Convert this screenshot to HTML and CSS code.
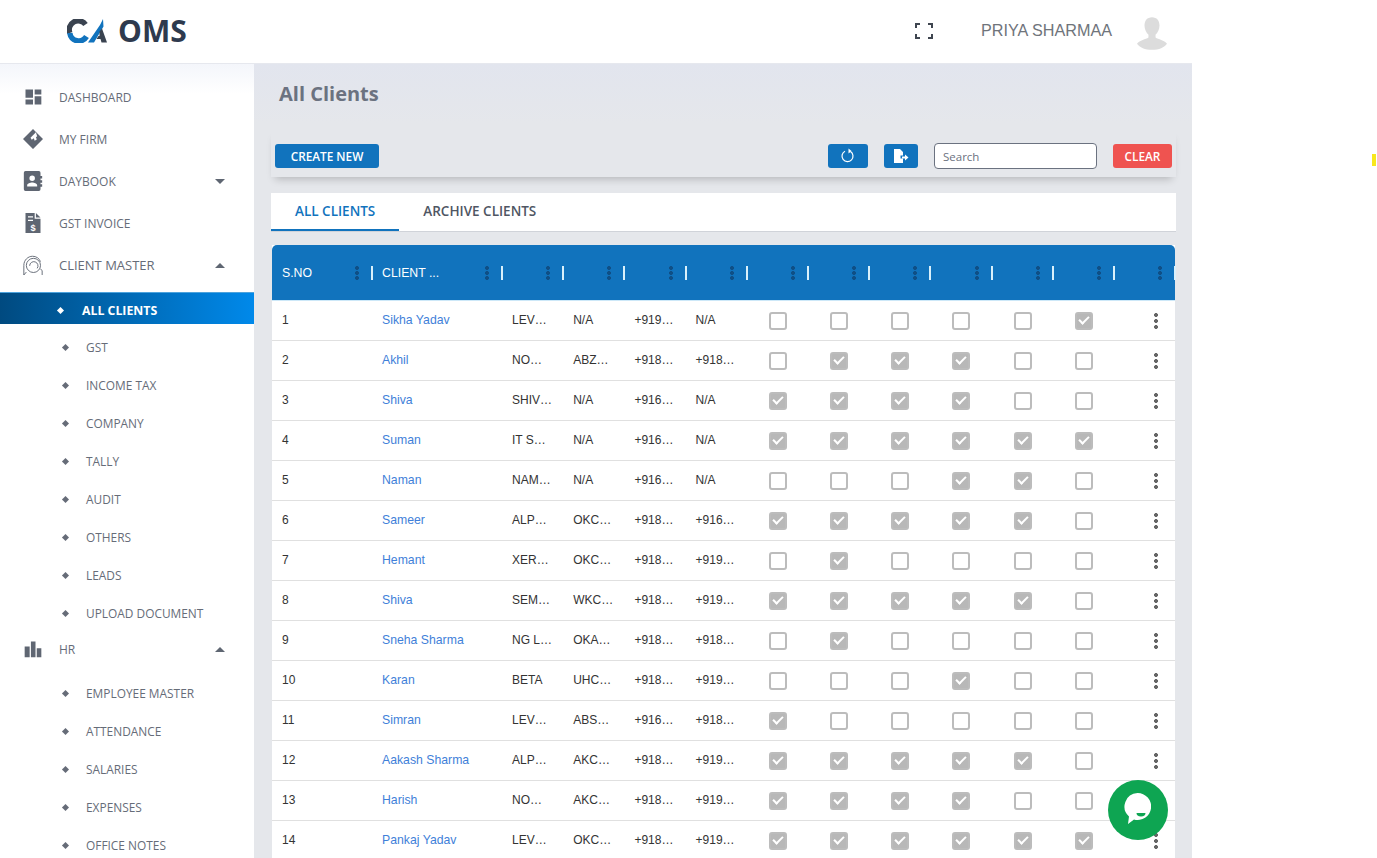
FILE: index.html
```html
<!DOCTYPE html>
<html lang="en">
<head>
  <meta charset="utf-8">
  <title>CA OMS - All Clients</title>
  <link rel="stylesheet" href="styles.css">
</head>
<body>
  <div class="app">
    <header class="topbar">
      <div class="logo">
        <svg class="logo-mark" width="40" height="24" viewBox="0 0 40 24">
          <path d="M18.500 5.500A9 9 0 0 0 2.800 14" fill="none" stroke="#3a4350" stroke-width="5.500"/>
          <path d="M2.800 14A9 9 0 0 0 19.500 17.500" fill="none" stroke="#1173bd" stroke-width="5.500"/>
          <path d="M21 23.500 33 6l3-6 .5 7.500L27 23.500z" fill="#1173bd"/>
          <path d="M32.500 12.500l2.500-3 5 14h-5.500l-1-3.500H29.500l2-3h1z" fill="#3a4350"/>
        </svg>
        <span class="logo-text">OMS</span>
      </div>
      <div class="topbar-right">
        <svg class="fullscreen" width="18" height="16" viewBox="0 0 18 16" fill="none" stroke="#3f4650" stroke-width="2">
          <path d="M1 5V1h4M13 1h4v4M17 11v4h-4M5 15H1v-4"/>
        </svg>
        <span class="user-name">PRIYA SHARMAA</span>
        <svg class="avatar" width="30" height="33" viewBox="0 0 34 37">
          <path d="M17 0c5.500 0 8.500 4 8.500 9.500 0 4-2 8-4.500 10.500v3c3 2 10 3 13 7-3 4-9 7-17 7S3 34 0 30c3-4 10-5 13-7v-3c-2.500-2.500-4.500-6.500-4.500-10.500C8.500 4 11.500 0 17 0z" fill="#dcdcdc"/>
        </svg>
      </div>
    </header>

    <div class="layout">
      <nav class="sidebar">
        <a class="nav-item">
          <svg class="nav-icon" viewBox="0 0 24 24"><path d="M3 13h9V3H3zm0 8h9v-6H3zm11 0h8V11h-8zm0-18v6h8V3z"/></svg>
          DASHBOARD
        </a>
        <a class="nav-item">
          <svg class="nav-icon" viewBox="0 0 24 24"><path fill-rule="evenodd" d="M12 0l12 12-12 12L0 12zM15.500 4 9 10.500 10.500 13 13 11l1 3 2.500-1.500-1-3 1.500-.5z"/></svg>
          MY FIRM
        </a>
        <a class="nav-item">
          <svg class="nav-icon" viewBox="0 0 24 24"><path fill-rule="evenodd" d="M3 0h16a2 2 0 0 1 2 2v4h2v3h-2v2h2v3h-2v2h2v3h-2v3a2 2 0 0 1-2 2H3a2 2 0 0 1-2-2V2a2 2 0 0 1 2-2zm8 5.500a3.300 3.300 0 1 0 0 6.600 3.300 3.300 0 0 0 0-6.600zM5 18.500h12v-1.500c0-2-3.500-3.300-6-3.300S5 15 5 17z"/></svg>
          DAYBOOK
          <span class="caret caret-down"></span>
        </a>
        <a class="nav-item">
          <svg class="nav-icon" viewBox="0 0 24 24"><path fill-rule="evenodd" d="M3 0h11v7h7v17H3zM15.500 0 21 5.500h-5.500zM6 4v1.500h6V4zm0 4v1.500h6V8z"/><text x="12" y="21" text-anchor="middle" class="icon-dollar">$</text></svg>
          GST INVOICE
        </a>
        <a class="nav-item nav-item-wide">
          <svg class="nav-icon nav-icon-line" viewBox="0 0 24 24"><path d="M1 24V12.500C1 6 6 1.500 11.500 1.500c4.500 0 8 2.500 9.500 6.500M23 24v-5l-2-2.500M1 24l3-3.500"/><circle cx="12.500" cy="12.500" r="8.500"/><path d="M8 13a5 5 0 1 1 9 3"/></svg>
          CLIENT MASTER
          <span class="caret caret-up"></span>
        </a>
        <div class="subnav subnav-first">
          <a class="sub-item active"><i class="diamond"></i>ALL CLIENTS</a>
          <a class="sub-item"><i class="diamond"></i>GST</a>
          <a class="sub-item"><i class="diamond"></i>INCOME TAX</a>
          <a class="sub-item"><i class="diamond"></i>COMPANY</a>
          <a class="sub-item"><i class="diamond"></i>TALLY</a>
          <a class="sub-item"><i class="diamond"></i>AUDIT</a>
          <a class="sub-item"><i class="diamond"></i>OTHERS</a>
          <a class="sub-item"><i class="diamond"></i>LEADS</a>
          <a class="sub-item"><i class="diamond"></i>UPLOAD DOCUMENT</a>
        </div>
        <a class="nav-item">
          <svg class="nav-icon" viewBox="0 0 24 24"><path d="M2 9h6v13H2zM9.500 3h5.500v19H9.500zM16.500 11H22v11h-5.500z"/></svg>
          HR
          <span class="caret caret-up"></span>
        </a>
        <div class="subnav">
          <a class="sub-item"><i class="diamond"></i>EMPLOYEE MASTER</a>
          <a class="sub-item"><i class="diamond"></i>ATTENDANCE</a>
          <a class="sub-item"><i class="diamond"></i>SALARIES</a>
          <a class="sub-item"><i class="diamond"></i>EXPENSES</a>
          <a class="sub-item"><i class="diamond"></i>OFFICE NOTES</a>
        </div>
      </nav>

      <main class="content">
        <h1 class="page-title">All Clients</h1>

        <div class="toolbar">
          <button class="btn btn-primary btn-create">CREATE NEW</button>
          <div class="toolbar-right">
            <button class="btn btn-primary btn-refresh">
              <svg width="16" height="16" viewBox="0 0 16 16" fill="none" stroke="#fff" stroke-width="1.200"><path d="M10.500 3.500a5.500 5.500 0 1 1-5.500-.3"/><path d="M8.500 .5 11.500 3 8.500 5.500z" fill="#fff" stroke="none"/></svg>
            </button>
            <button class="btn btn-primary btn-export">
              <svg width="16" height="14" viewBox="0 0 16 14"><path d="M1 0h6l3 3v3.500H7.500v3H10V14H1z" fill="#fff"/><path d="M9 7.500h3V5.500l3.500 3-3.500 3v-2H9z" fill="#fff"/></svg>
            </button>
            <input class="search" type="text" placeholder="Search">
            <button class="btn btn-clear">CLEAR</button>
          </div>
        </div>

        <div class="tabs">
          <a class="tab tab-active">ALL CLIENTS</a>
          <a class="tab">ARCHIVE CLIENTS</a>
        </div>

        <table class="clients">
          <colgroup>
            <col class="col-sno"><col class="col-name">
            <col class="col-std"><col class="col-std"><col class="col-std"><col class="col-std">
            <col class="col-std"><col class="col-std"><col class="col-std"><col class="col-std"><col class="col-std"><col class="col-std">
            <col class="col-last">
          </colgroup>
          <thead>
            <tr>
              <th><div class="th-in"><span class="th-label">S.NO</span><i class="kebab kebab-head"></i><i class="sep"></i></div></th>
              <th><div class="th-in"><span class="th-label">CLIENT ...</span><i class="kebab kebab-head"></i><i class="sep"></i></div></th>
              <th><div class="th-in"><span class="th-label"></span><i class="kebab kebab-head"></i><i class="sep"></i></div></th>
              <th><div class="th-in"><span class="th-label"></span><i class="kebab kebab-head"></i><i class="sep"></i></div></th>
              <th><div class="th-in"><span class="th-label"></span><i class="kebab kebab-head"></i><i class="sep"></i></div></th>
              <th><div class="th-in"><span class="th-label"></span><i class="kebab kebab-head"></i><i class="sep"></i></div></th>
              <th><div class="th-in"><span class="th-label"></span><i class="kebab kebab-head"></i><i class="sep"></i></div></th>
              <th><div class="th-in"><span class="th-label"></span><i class="kebab kebab-head"></i><i class="sep"></i></div></th>
              <th><div class="th-in"><span class="th-label"></span><i class="kebab kebab-head"></i><i class="sep"></i></div></th>
              <th><div class="th-in"><span class="th-label"></span><i class="kebab kebab-head"></i><i class="sep"></i></div></th>
              <th><div class="th-in"><span class="th-label"></span><i class="kebab kebab-head"></i><i class="sep"></i></div></th>
              <th><div class="th-in"><span class="th-label"></span><i class="kebab kebab-head"></i><i class="sep"></i></div></th>
              <th><div class="th-in"><span class="th-label"></span><i class="kebab kebab-head"></i><i class="sep"></i></div></th>
            </tr>
          </thead>
          <tbody>
            <tr><td>1</td><td class="name">Sikha Yadav</td><td>LEV…</td><td>N/A</td><td>+919…</td><td>N/A</td><td class="c"><i class="cb"></i></td><td class="c"><i class="cb"></i></td><td class="c"><i class="cb"></i></td><td class="c"><i class="cb"></i></td><td class="c"><i class="cb"></i></td><td class="c"><i class="cb on"></i></td><td class="m"><i class="kebab"></i></td></tr>
            <tr><td>2</td><td class="name">Akhil</td><td>NO…</td><td>ABZ…</td><td>+918…</td><td>+918…</td><td class="c"><i class="cb"></i></td><td class="c"><i class="cb on"></i></td><td class="c"><i class="cb on"></i></td><td class="c"><i class="cb on"></i></td><td class="c"><i class="cb"></i></td><td class="c"><i class="cb"></i></td><td class="m"><i class="kebab"></i></td></tr>
            <tr><td>3</td><td class="name">Shiva</td><td>SHIV…</td><td>N/A</td><td>+916…</td><td>N/A</td><td class="c"><i class="cb on"></i></td><td class="c"><i class="cb on"></i></td><td class="c"><i class="cb on"></i></td><td class="c"><i class="cb on"></i></td><td class="c"><i class="cb"></i></td><td class="c"><i class="cb"></i></td><td class="m"><i class="kebab"></i></td></tr>
            <tr><td>4</td><td class="name">Suman</td><td>IT S…</td><td>N/A</td><td>+916…</td><td>N/A</td><td class="c"><i class="cb on"></i></td><td class="c"><i class="cb on"></i></td><td class="c"><i class="cb on"></i></td><td class="c"><i class="cb on"></i></td><td class="c"><i class="cb on"></i></td><td class="c"><i class="cb on"></i></td><td class="m"><i class="kebab"></i></td></tr>
            <tr><td>5</td><td class="name">Naman</td><td>NAM…</td><td>N/A</td><td>+916…</td><td>N/A</td><td class="c"><i class="cb"></i></td><td class="c"><i class="cb"></i></td><td class="c"><i class="cb"></i></td><td class="c"><i class="cb on"></i></td><td class="c"><i class="cb on"></i></td><td class="c"><i class="cb"></i></td><td class="m"><i class="kebab"></i></td></tr>
            <tr><td>6</td><td class="name">Sameer</td><td>ALP…</td><td>OKC…</td><td>+918…</td><td>+916…</td><td class="c"><i class="cb on"></i></td><td class="c"><i class="cb on"></i></td><td class="c"><i class="cb on"></i></td><td class="c"><i class="cb on"></i></td><td class="c"><i class="cb on"></i></td><td class="c"><i class="cb"></i></td><td class="m"><i class="kebab"></i></td></tr>
            <tr><td>7</td><td class="name">Hemant</td><td>XER…</td><td>OKC…</td><td>+918…</td><td>+919…</td><td class="c"><i class="cb"></i></td><td class="c"><i class="cb on"></i></td><td class="c"><i class="cb"></i></td><td class="c"><i class="cb"></i></td><td class="c"><i class="cb"></i></td><td class="c"><i class="cb"></i></td><td class="m"><i class="kebab"></i></td></tr>
            <tr><td>8</td><td class="name">Shiva</td><td>SEM…</td><td>WKC…</td><td>+918…</td><td>+919…</td><td class="c"><i class="cb on"></i></td><td class="c"><i class="cb on"></i></td><td class="c"><i class="cb on"></i></td><td class="c"><i class="cb on"></i></td><td class="c"><i class="cb on"></i></td><td class="c"><i class="cb"></i></td><td class="m"><i class="kebab"></i></td></tr>
            <tr><td>9</td><td class="name">Sneha Sharma</td><td>NG L…</td><td>OKA…</td><td>+918…</td><td>+918…</td><td class="c"><i class="cb"></i></td><td class="c"><i class="cb on"></i></td><td class="c"><i class="cb"></i></td><td class="c"><i class="cb"></i></td><td class="c"><i class="cb"></i></td><td class="c"><i class="cb"></i></td><td class="m"><i class="kebab"></i></td></tr>
            <tr><td>10</td><td class="name">Karan</td><td>BETA</td><td>UHC…</td><td>+918…</td><td>+919…</td><td class="c"><i class="cb"></i></td><td class="c"><i class="cb"></i></td><td class="c"><i class="cb"></i></td><td class="c"><i class="cb on"></i></td><td class="c"><i class="cb"></i></td><td class="c"><i class="cb"></i></td><td class="m"><i class="kebab"></i></td></tr>
            <tr><td>11</td><td class="name">Simran</td><td>LEV…</td><td>ABS…</td><td>+916…</td><td>+918…</td><td class="c"><i class="cb on"></i></td><td class="c"><i class="cb"></i></td><td class="c"><i class="cb"></i></td><td class="c"><i class="cb"></i></td><td class="c"><i class="cb"></i></td><td class="c"><i class="cb"></i></td><td class="m"><i class="kebab"></i></td></tr>
            <tr><td>12</td><td class="name">Aakash Sharma</td><td>ALP…</td><td>AKC…</td><td>+918…</td><td>+919…</td><td class="c"><i class="cb on"></i></td><td class="c"><i class="cb on"></i></td><td class="c"><i class="cb on"></i></td><td class="c"><i class="cb on"></i></td><td class="c"><i class="cb on"></i></td><td class="c"><i class="cb"></i></td><td class="m"><i class="kebab"></i></td></tr>
            <tr><td>13</td><td class="name">Harish</td><td>NO…</td><td>AKC…</td><td>+918…</td><td>+919…</td><td class="c"><i class="cb on"></i></td><td class="c"><i class="cb on"></i></td><td class="c"><i class="cb on"></i></td><td class="c"><i class="cb on"></i></td><td class="c"><i class="cb"></i></td><td class="c"><i class="cb"></i></td><td class="m"><i class="kebab"></i></td></tr>
            <tr><td>14</td><td class="name">Pankaj Yadav</td><td>LEV…</td><td>OKC…</td><td>+918…</td><td>+919…</td><td class="c"><i class="cb on"></i></td><td class="c"><i class="cb on"></i></td><td class="c"><i class="cb on"></i></td><td class="c"><i class="cb on"></i></td><td class="c"><i class="cb on"></i></td><td class="c"><i class="cb on"></i></td><td class="m"><i class="kebab"></i></td></tr>
          </tbody>
        </table>
      </main>
    </div>
  </div>

  <div class="chat-fab">
    <svg width="27" height="31" viewBox="0 0 27 31">
      <path d="M13.500 0a13.500 13.500 0 1 1-3.500 26.500L4 31l1-7.500A13.500 13.500 0 0 1 13.500 0z" fill="#fff"/>
      <path d="M12.500 20h9a4.500 3.500 0 0 1-9 0z" fill="#0ea552"/>
    </svg>
  </div>
  <i class="edge-mark"></i>
</body>
</html>
```

FILE: styles.css
```css
html, body {
  margin: 0;
  height: 858px;
  overflow: hidden;
  background: #fff;
}

body {
  font-family: "Open Sans", sans-serif;
  color: #6b7280;
}

.app {
  width: 1192px;
}

/* top bar */
.topbar {
  display: flex;
  justify-content: space-between;
  align-items: center;
  height: 64px;
  box-sizing: border-box;
  padding: 0 25px 1px 67px;
  background: #fff;
  border-bottom: 1px solid #e6e8ee;
}

.logo {
  display: flex;
  align-items: center;
}

.logo-mark {
  margin-right: 11px;
}

.logo-text {
  font-size: 30px;
  font-weight: 700;
  color: #2e3a4e;
  line-height: 1;
}

.topbar-right {
  display: flex;
  align-items: center;
}

.fullscreen {
  margin-right: 48px;
}

.user-name {
  font-family: "Liberation Sans", sans-serif;
  font-size: 16.200px;
  color: #6f747b;
  margin: 0 25px 2px 0;
}

.avatar {
  margin-top: 4px;
}

/* sidebar */
.layout {
  display: flex;
}

.sidebar {
  width: 254px;
  height: 794px;
  flex-shrink: 0;
  box-sizing: border-box;
  padding-top: 12px;
  overflow: hidden;
  background: linear-gradient(#f4f6fb, #fff 30px);
}

.nav-item {
  display: flex;
  align-items: center;
  height: 42px;
  padding-left: 23px;
  font-size: 12px;
  font-weight: 500;
  color: #666c78;
}

.nav-item-wide {
  font-size: 13px;
}

.nav-icon {
  width: 20px;
  height: 20px;
  margin-right: 16px;
  fill: #5f6672;
}

.nav-icon-line {
  fill: none;
  stroke: #5f6672;
  stroke-width: 1.100;
}

.icon-dollar {
  fill: #fff;
  font-family: "Liberation Sans", sans-serif;
  font-size: 11px;
  font-weight: 700;
}

.caret {
  margin-left: auto;
  margin-right: 29px;
  border-left: 5.500px solid transparent;
  border-right: 5.500px solid transparent;
}

.caret-down {
  border-top: 5.500px solid #5f6672;
}

.caret-up {
  border-bottom: 5.500px solid #5f6672;
}

.subnav {
  display: flex;
  flex-direction: column;
  gap: 8px;
  padding-top: 8px;
}

.subnav-first {
  padding-top: 6px;
}

.sub-item {
  display: flex;
  align-items: center;
  height: 30px;
  padding-left: 63px;
  font-size: 11.900px;
  font-weight: 500;
  color: #666c78;
}

.diamond {
  width: 5px;
  height: 5px;
  margin-right: 18px;
  background: #666c78;
  transform: rotate(45deg);
}

.sub-item.active {
  height: 32px;
  padding-left: 58px;
  padding-top: 3px;
  font-size: 12.300px;
  font-weight: 700;
  color: #fff;
  background: linear-gradient(90deg, #004a80, #0089ea);
  border-top: 1px solid #4da3dd;
  box-sizing: border-box;
}

.sub-item.active .diamond {
  background: #fff;
  margin-right: 19px;
}

/* main content */
.content {
  flex: 1;
  height: 794px;
  padding: 0 16px 0 17px;
  overflow: hidden;
  background: linear-gradient(#e2e5ee, #e5e7eb 60px);
}

.page-title {
  margin: 0;
  padding: 16px 0 0 8px;
  font-size: 20px;
  line-height: 28px;
  font-weight: 700;
  color: #6b7280;
}

.toolbar {
  display: flex;
  justify-content: space-between;
  align-items: center;
  height: 48px;
  box-sizing: border-box;
  margin-top: 21px;
  padding: 6px 4px 0;
  box-shadow: 0 6px 8px -4px rgba(0, 0, 0, 0.22);
}

.toolbar-right {
  display: flex;
  align-items: center;
}

.btn {
  display: flex;
  align-items: center;
  justify-content: center;
  height: 24px;
  padding: 0;
  border: 0;
  border-radius: 3px;
  font-family: "Open Sans", sans-serif;
  font-size: 11.800px;
  font-weight: 600;
  color: #fff;
}

.btn-primary {
  background: #1173bd;
}

.btn-create {
  width: 104px;
}

.btn-refresh {
  width: 40px;
  margin-right: 16px;
}

.btn-export {
  width: 34px;
  margin-right: 16px;
}

.search {
  width: 163px;
  height: 26px;
  box-sizing: border-box;
  padding: 0 8px;
  margin-right: 16px;
  border: 1px solid #6b7280;
  border-radius: 4px;
  font-family: "Open Sans", sans-serif;
  font-size: 11.500px;
  background: #fff;
}

.search::placeholder {
  color: #6b7280;
}

.btn-clear {
  width: 59px;
  background: #ef5350;
}

/* tabs */
.tabs {
  display: flex;
  height: 39px;
  box-sizing: border-box;
  margin-top: 16px;
  background: #fff;
  border-bottom: 1px solid #d0d3d9;
}

.tab {
  display: flex;
  align-items: center;
  height: 38px;
  box-sizing: border-box;
  padding: 0 24px;
  border-bottom: 2px solid transparent;
  font-size: 13.500px;
  font-weight: 600;
  color: #4f5663;
}

.tab-active {
  color: #1173bd;
  border-bottom-color: #1173bd;
}

/* table */
.clients {
  width: 903px;
  margin: 13px 0 0 1px;
  table-layout: fixed;
  border-collapse: separate;
  border-spacing: 0;
  font-family: "Liberation Sans", sans-serif;
  font-size: 12px;
  background: #fff;
}

.col-sno { width: 100px; }
.col-name { width: 130px; }
.col-std { width: 61.200px; }
.col-last { width: 61px; }

.clients th {
  height: 55px;
  padding: 0;
  background: #1173bd;
  font-weight: 400;
  text-align: left;
  color: #fff;
}

.clients th:first-child {
  border-top-left-radius: 5px;
}

.clients th:last-child {
  border-top-right-radius: 5px;
}

.th-in {
  display: flex;
  align-items: center;
  padding-left: 10px;
}

.th-label {
  flex: 1;
  font-size: 12.300px;
  white-space: nowrap;
}

.sep {
  width: 2px;
  height: 14px;
  margin-left: 12px;
  margin-right: -1px;
  background: #d9f0fb;
}

.kebab {
  display: inline-block;
  position: relative;
  top: 1px;
  width: 4px;
  height: 16px;
  background: radial-gradient(circle at 2px 2px, #666 1.800px, transparent 2.200px) 0 0 / 4px 6px;
  vertical-align: middle;
}

.kebab-head {
  top: 0;
  height: 14px;
  background: radial-gradient(circle at 2px 2px, #0f4f86 1.800px, transparent 2.200px) 0 0 / 4px 5px;
}

.clients td {
  height: 40px;
  box-sizing: border-box;
  padding: 0 10px 1px;
  border-top: 1px solid #e0e0e0;
  color: #333;
  white-space: nowrap;
}

.clients tbody tr:first-child td {
  border-top-color: #cde8f8;
}

.clients td.name {
  font-size: 12.250px;
  color: #3f7fd9;
}

.clients td.c {
  padding: 0 0 1px 1px;
  text-align: center;
}

.clients td.m {
  padding: 0 17px 1px 0;
  text-align: right;
}

.cb {
  display: inline-block;
  position: relative;
  top: 1px;
  width: 18px;
  height: 18px;
  box-sizing: border-box;
  border: 2px solid #bcbcbc;
  border-radius: 3px;
  vertical-align: middle;
}

.cb.on {
  background: #b8b8b8;
}

.cb.on::after {
  content: "";
  position: absolute;
  left: 2px;
  top: 0;
  width: 8px;
  height: 4px;
  margin-top: 2px;
  border-left: 2px solid #fff;
  border-bottom: 2px solid #fff;
  transform: rotate(-45deg);
}

/* floating bits */
.chat-fab {
  position: absolute;
  left: 1108px;
  top: 780px;
  display: flex;
  align-items: center;
  justify-content: center;
  width: 60px;
  height: 60px;
  padding: 0 2px 3px 0;
  box-sizing: border-box;
  border-radius: 50%;
  background: #0ea552;
}

.edge-mark {
  position: absolute;
  left: 1372px;
  top: 154px;
  width: 4px;
  height: 12px;
  background: #f8e71c;
}
```
